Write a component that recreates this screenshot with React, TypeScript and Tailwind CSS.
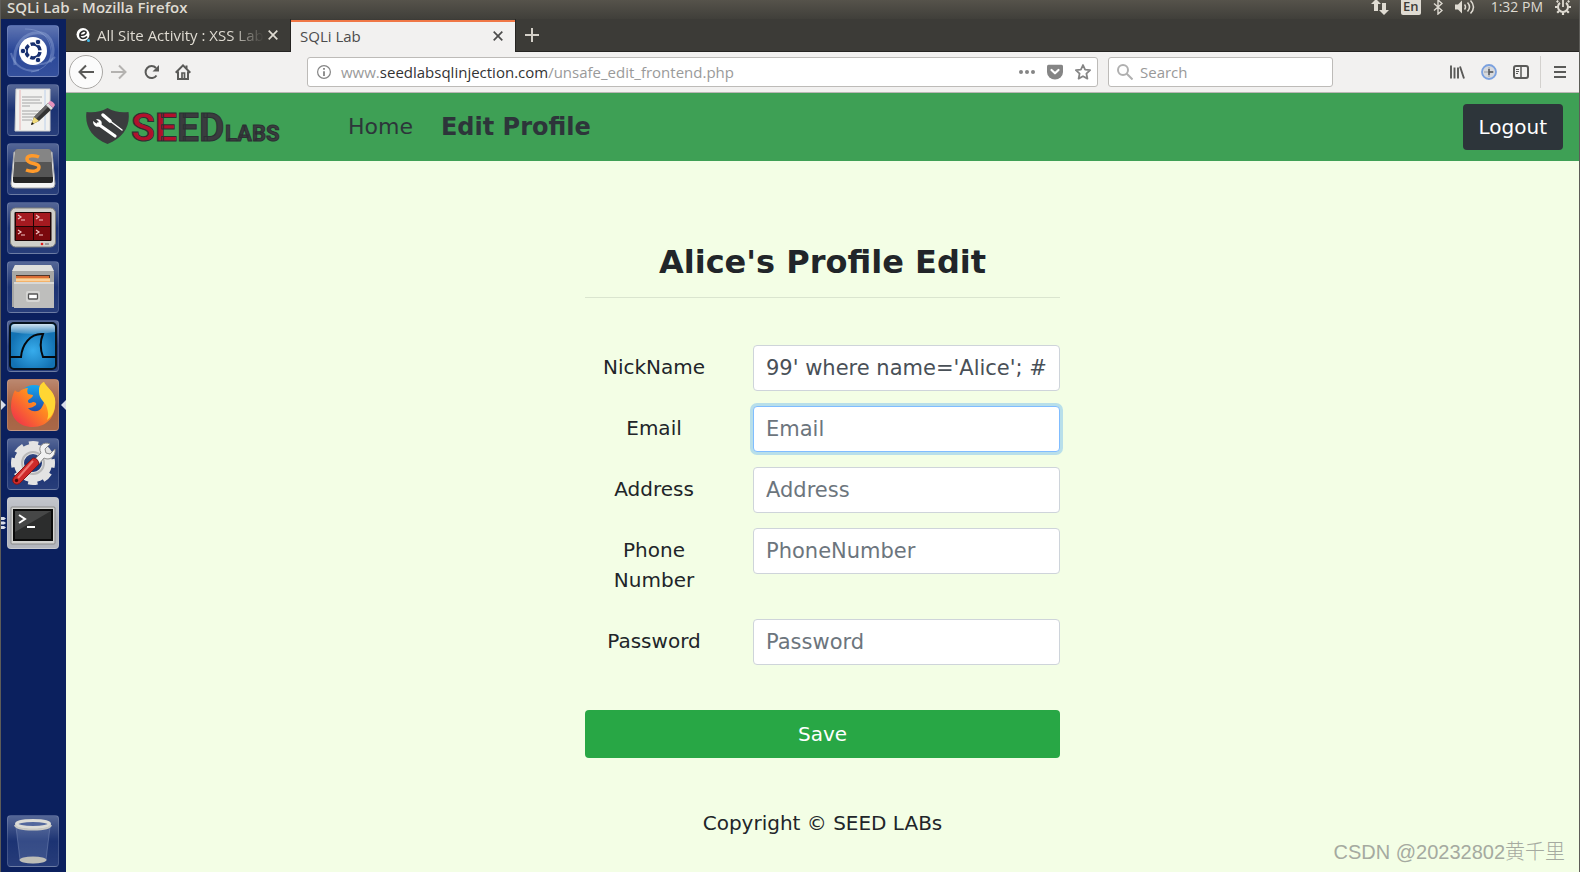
import type { ReactNode } from "react";

const fields = [
  { id: "nickname", label: "NickName", value: "99' where name='Alice'; #" },
  { id: "email", label: "Email", placeholder: "Email", active: true },
  { id: "address", label: "Address", placeholder: "Address" },
  { id: "phone", label: "Phone Number", placeholder: "PhoneNumber" },
  { id: "password", label: "Password", placeholder: "Password" },
];

export default function App() {
  return (
    <div className="relative flex min-h-screen flex-col border-x border-[#5d5c58] bg-[#3c3b37] font-['Open_Sans','Noto_Sans',sans-serif] text-[15px]">
      <TopPanel />
      <div className="flex flex-1">
        <Launcher />
        <div className="flex min-w-0 flex-1 flex-col">
          <TabStrip />
          <Toolbar />
          <ProfilePage />
        </div>
      </div>
      <div className="absolute right-3.5 bottom-2 font-['Liberation_Sans','Noto_Sans_CJK_SC',sans-serif] text-[20px] leading-6 font-light text-[#a5aaa0]">
        CSDN @20232802黄千里
      </div>
    </div>
  );
}

function TopPanel() {
  return (
    <header className="flex h-[19px] items-center bg-gradient-to-b from-[#56534b] to-[#403f3a] pr-2 pb-1.5 pl-1.5 text-[#dfdbd2]">
      <h1 className="text-[15px] leading-4 font-semibold">
        SQLi Lab - Mozilla Firefox
      </h1>
      <div className="ml-auto flex items-center">
        <svg className="mr-3 h-4 w-[18px]" viewBox="0 0 18 16" fill="currentColor">
          <path d="M5 0 0 5h3v7h4V5h3zM13 16l-5-5h3V4h4v7h3z" />
        </svg>
        <span className="mr-3 h-[17px] w-5 rounded-xs bg-[#dfdbd2] text-center text-[13px] leading-[17px] font-semibold text-[#3c3b37]">
          En
        </span>
        <svg className="mr-3 h-4 w-2.5" viewBox="0 0 10 16" fill="none" stroke="currentColor" strokeWidth="1.4">
          <path d="m1 4.500 8 7-4 3.500V1l4 3.500-8 7" />
        </svg>
        <svg className="mr-4 h-4 w-5" viewBox="0 0 20 16" fill="none" stroke="currentColor" strokeWidth="1.5">
          <path d="M0 5.500h3l4-4v13l-4-4H0z" fill="currentColor" stroke="none" />
          <path d="M9.500 5.500q2 2.500 0 5M12.500 3.500q4 4.500 0 9M15.500 1.500q6 6.500 0 13" />
        </svg>
        <span className="mr-3 text-[14px] leading-4">1:32 PM</span>
        <svg className="h-4 w-4" viewBox="0 0 16 16" fill="none" stroke="currentColor">
          <path d="M5 3.900a5 5 0 1 0 6 0" strokeWidth="2" />
          <path d="M8 1v7" strokeWidth="1.800" />
          <path
            d="M3.100 3.100 1.800 1.800M12.900 3.100l1.300-1.300M2.500 8H0M13.500 8H16M4 12l-1.800 1.800M12 12l1.800 1.800M8 13.500V16"
            strokeWidth="2.200"
          />
        </svg>
      </div>
    </header>
  );
}

function Tile({
  name,
  className = "bg-[#1c3373]",
  children,
}: {
  name: string;
  className?: string;
  children: ReactNode;
}) {
  return (
    <button
      aria-label={name}
      className={`relative block h-[52px] w-[52px] rounded border border-white/15 bg-gradient-to-b from-white/25 via-white/0 to-white/5 ${className}`}
    >
      <svg className="h-[50px] w-[50px]" viewBox="1 1 50 50">
        {children}
      </svg>
    </button>
  );
}

function Launcher() {
  return (
    <aside className="flex w-[65px] shrink-0 flex-col items-start gap-[7px] bg-[#0b205e] pt-1.5 pb-[5px] pl-1.5">
      <Tile name="Dash" className="bg-[#2a4798]">
        <g fill="none" stroke="#a9bce4" strokeOpacity=".35">
          <path d="M8 40C5 20 18 6 34 8c12 2 15 18 9 29" strokeWidth="3" />
          <path d="M18 4C35 4 44 13 44 28 43 41 32 46 24 47" />
          <path d="M4 28c3 13 14 20 28 17M48 32c-8 9-24 10-34 2" strokeWidth="2" />
        </g>
        <circle cx="26" cy="26" r="14" fill="#fff" />
        <circle cx="26" cy="26" r="7" fill="none" stroke="#172f70" strokeWidth="3.500" strokeDasharray="12.660 2" strokeDashoffset="-1" />
        <g fill="#172f70" stroke="#fff" strokeWidth="1">
          <circle cx="16" cy="26" r="2.800" />
          <circle cx="31" cy="17" r="2.800" />
          <circle cx="31" cy="35" r="2.800" />
        </g>
      </Tile>
      <Tile name="Text Editor">
        <path d="M9 5h34v42H8z" fill="#f1f1ef" stroke="#cfcfcf" />
        <path d="M13 6v40" stroke="#e9b3b3" />
        <path d="M38 6v40" stroke="#bcd0ea" />
        <path d="M15 13h20M15 16h18M15 19h20M15 22h8M15 27h20M15 30h17M15 33h12M15 36h10" stroke="#a5a5a5" />
        <path d="m24 41 3-8 14-14 5 5-14 13z" fill="#333" />
        <path d="m27 33 14-14 2 2-14 14z" fill="#666" />
        <path d="m24 41 3-8 5 4z" fill="#f2dc7a" />
        <path d="m24 41 1-3 2 2z" fill="#111" />
        <path d="m39 21 2-2 5 5-2 2z" fill="#ddd" />
        <path d="m41 19 2-2q3 0 5 4l-2 3z" fill="#e692bd" />
      </Tile>
      <Tile name="Sublime Text">
        <path d="M7 9h38l3 32q0 4-4 4H8q-4 0-4-4z" fill="#f4f4f4" stroke="#aaa" />
        <path d="M11 6h30q3 0 3 3l2 26H6L8 9q0-3 3-3z" fill="#555" />
        <path d="M11 6h30q3 0 3 3l1 10H7L8 9q0-3 3-3z" fill="#858585" />
        <path d="M6 34h40v4q0 2-2 2H8q-2 0-2-2z" fill="#262626" />
        <path d="M32 14c-4-2-12-2-12 2 0 6 12 3 12 8 0 5-8 5-13 3" fill="none" stroke="#ff9a2b" strokeWidth="3.500" />
      </Tile>
      <Tile name="Terminator">
        <rect x="3.500" y="6" width="45" height="39" rx="5" fill="#cfcfc9" stroke="#80807a" />
        <rect x="7.500" y="10" width="37" height="29" rx="1" fill="#1d0505" />
        <path d="M9 11h17v13H9zM27 11h16v13H27z" fill="#a41a20" />
        <path d="M9 25h17v13H9zM27 25h16v13H27z" fill="#7a080d" />
        <g fill="none" stroke="#f3c5c5" strokeWidth="1.200">
          <path d="m11 13 3 2-3 2M14 18h4M29 13l3 2-3 2M32 18h4M11 28l3 2-3 2M14 33h4M29 28l3 2-3 2M32 33h4" />
        </g>
        <circle cx="35" cy="42" r="1.300" fill="#e01b1b" />
        <path d="M38 41h4v2h-4z" fill="#999" />
      </Tile>
      <Tile name="Files">
        <path d="m8 4h36l3 7v35H5V11z" fill="#a7a7a5" />
        <path d="M8 4h36l3 6H5z" fill="#dededc" />
        <path d="M9 14h34v8H9z" fill="#51372a" />
        <path d="M9 15h33v4H9z" fill="#d96c35" />
        <path d="M9 17h34v5H9z" fill="#f3b269" />
        <path d="M9 19h34" stroke="#fff0d2" />
        <path d="M7 21h40v26H7z" fill="#bebebc" />
        <path d="M7 21h40v2H7z" fill="#d8d8d6" />
        <rect x="19" y="30" width="14" height="11" rx="2" fill="#d6d6d4" />
        <rect x="21.500" y="33" width="9" height="5" rx=".5" fill="#fff" stroke="#555" strokeWidth="1.300" />
      </Tile>
      <Tile name="Wireshark">
        <defs>
          <radialGradient id="sea" cy=".6">
            <stop stopColor="#37acec" />
            <stop offset="1" stopColor="#1372b3" />
          </radialGradient>
          <linearGradient id="gloss" x2="0" y2="1">
            <stop stopColor="#fff" stopOpacity=".8" />
            <stop offset="1" stopColor="#fff" stopOpacity=".15" />
          </linearGradient>
        </defs>
        <rect x="3" y="3" width="46" height="46" rx="4" fill="url(#sea)" stroke="#06121d" strokeWidth="2" />
        <path d="M4 8q0-4 4-4h36q4 0 4 4v4Q26 16 4 12z" fill="url(#gloss)" />
        <path d="M3 37h11c1-12 9-24 22-23-3 7-3 15 0 23h13" fill="none" stroke="#05080c" strokeWidth="2" />
      </Tile>
      <div className="relative">
        <Tile name="Firefox" className="bg-[#a5603f]">
          <defs>
            <linearGradient id="fire" x1="1" x2="0" y2="1">
              <stop stopColor="#ffd43b" />
              <stop offset=".45" stopColor="#ff8a20" />
              <stop offset="1" stopColor="#ee2451" />
            </linearGradient>
            <linearGradient id="globe" x2="0" y2="1">
              <stop stopColor="#14a7ef" />
              <stop offset="1" stopColor="#20399d" />
            </linearGradient>
          </defs>
          <circle cx="27" cy="22" r="16" fill="url(#globe)" />
          <path
            d="M8 11c1 2 3 2 4 2 3-3 6-4 9-4-1 2-1 4 0 6l5 1c0 3-5 4-5 6 0 3 3 2 5 1 2 0 4 1 3 3-3 2-4 3-8 3 4 5 12 4 14-1 4-6 2-11-3-15 0-5 1-8 5-10 1 4 9 8 11 17 2 17-8 28-22 28C12 48 4 39 4 27c0-6 2-12 4-16z"
            fill="url(#fire)"
          />
          <path d="M37 3c1 4 9 8 11 17 1 10-2 17-8 21 2-5 1-8 0-12-1-6-8-8-8-16 0-5 1-8 5-10z" fill="#ffd633" />
        </Tile>
        <svg className="absolute top-[21px] -left-[6px] h-2.5 w-[5px]" viewBox="0 0 5 10" fill="#d9dde8">
          <path d="m0 0 5 5-5 5z" />
        </svg>
        <svg className="absolute top-[21px] -right-[7px] h-2.5 w-[5px]" viewBox="0 0 5 10" fill="#d9dde8">
          <path d="M5 0 0 5l5 5z" />
        </svg>
      </div>
      <Tile name="System Settings">
        <circle cx="26" cy="25" r="14" fill="none" stroke="#e3e3e3" strokeWidth="10" />
        <circle cx="26" cy="25" r="19" fill="none" stroke="#e3e3e3" strokeWidth="6" strokeDasharray="9 5.920" strokeDashoffset="4.500" />
        <circle cx="26" cy="25" r="11" fill="none" stroke="#b9b9b9" strokeWidth="2" />
        <path d="m27 22 7-7c-4-7 3-12 9-9l-5 5 1 4 4 1 5-5c1 8-6 12-11 9l-5 6z" fill="#f1f1f1" stroke="#8a8a8a" />
        <path d="M26 20q5 0 6 6L13 45q-4 3-7-1-1-3 1-5z" fill="#cf2a2a" stroke="#891515" />
        <path d="M26 23 11 40" stroke="#ef7a74" strokeWidth="2" />
        <circle cx="9.500" cy="42.500" r="1.700" fill="#4d0a0a" />
      </Tile>
      <div className="relative">
        <Tile name="Terminal" className="bg-[#b0b3bb]">
          <rect x="4" y="10" width="44" height="37" rx="1" fill="#d3d3d1" stroke="#8b8b8b" />
          <rect x="7" y="13" width="38" height="30" fill="#2c2d2d" stroke="#0a0a0a" strokeWidth="2" />
          <path d="M8 14h36L8 35z" fill="#464747" />
          <path d="m12 18 6 4-6 4M20 30h8" fill="none" stroke="#fff" strokeWidth="2" />
        </Tile>
        <svg className="absolute top-5 -left-[6px] h-3 w-[5px]" viewBox="0 0 5 12" fill="#d9dde8">
          <path d="M0 0h3l2 1.500L3 3H0zM0 4.500h3L5 6 3 7.500H0zM0 9h3l2 1.500L3 12H0z" />
        </svg>
      </div>
      <div className="mt-auto">
        <Tile name="Trash">
          <path d="m9 12 4 33q13 6 26 0l4-33z" fill="#9db0d8" fillOpacity=".2" stroke="#9baacf" strokeOpacity=".35" />
          <ellipse cx="26" cy="45" rx="13.500" ry="3.500" fill="#bdbdb7" />
          <ellipse cx="26" cy="9" rx="16.500" ry="3.500" fill="#53689d" stroke="#dcdcd7" strokeWidth="3" />
          <path d="M8 10q1 4.500 18 4.500T44 10" fill="none" stroke="#c9c9c4" strokeWidth="2" />
        </Tile>
      </div>
    </aside>
  );
}

function CloseIcon() {
  return (
    <svg className="h-2.5 w-2.5" viewBox="0 0 10 10" fill="none" stroke="currentColor" strokeWidth="1.700">
      <path d="m.7.7 8.600 8.600M9.300.7.7 9.300" />
    </svg>
  );
}

function TabStrip() {
  return (
    <div className="flex h-[33px] items-end bg-[#3c3b37]">
      <div className="flex h-[33px] w-[225px] items-center border-r border-b border-[#252422] pr-3 pl-2.5 text-[#dfdbd2]">
        <svg className="h-3.5 w-3.5 shrink-0" viewBox="0 0 14 14">
          <circle cx="7" cy="6.500" r="6.500" fill="#fff" />
          <path d="M3.500 7.500C12 7.500 11 2.500 7.500 3 3 4 2.500 10.500 7 10.500c2 0 3-.8 4-2" fill="none" stroke="#292a2b" strokeWidth="1.600" />
          <circle cx="12.500" cy="12.500" r="1.500" fill="#42b8e6" />
        </svg>
        <button className="ml-[7px] flex-1 mask-r-from-80% text-left leading-5 whitespace-nowrap">
          All Site Activity : XSS Lab
        </button>
        <button aria-label="Close tab" className="ml-1">
          <CloseIcon />
        </button>
      </div>
      <div className="flex h-8 w-[224px] items-center justify-between border-t-2 border-[#f07746] bg-[#f2f1f0] pr-3 pb-0.5 pl-[9px] text-[#4c4c4c]">
        <button className="leading-5">SQLi Lab</button>
        <button aria-label="Close tab">
          <CloseIcon />
        </button>
      </div>
      <button
        aria-label="New tab"
        className="flex h-[33px] flex-1 items-center border-b border-l border-[#252422] pl-[9px] text-[#d4d0c8]"
      >
        <svg className="h-3.5 w-3.5" viewBox="0 0 14 14" stroke="currentColor" strokeWidth="2">
          <path d="M7 0v14M0 7h14" />
        </svg>
      </button>
    </div>
  );
}

function Toolbar() {
  return (
    <div className="flex h-[41px] items-center border-b border-[#b9b7b5] bg-[#f2f1f0] pr-[13px] text-[#5a5a58]">
      <button aria-label="Back" className="ml-[3px] flex h-[34px] w-[34px] items-center justify-center rounded-full border border-[#a9a7a4] bg-[#fbfbfb]">
        <svg className="h-4 w-4" viewBox="0 0 16 16" fill="none" stroke="currentColor" strokeWidth="2">
          <path d="M16 8H1.500M8 1.500 1.500 8 8 14.500" />
        </svg>
      </button>
      <button aria-label="Forward" className="ml-2 text-[#b4b2b0]">
        <svg className="h-4 w-4" viewBox="0 0 16 16" fill="none" stroke="currentColor" strokeWidth="2">
          <path d="M0 8h14.500M8 1.500 14.500 8 8 14.500" />
        </svg>
      </button>
      <button aria-label="Reload" className="ml-4">
        <svg className="h-4 w-4" viewBox="0 0 16 16" fill="none" stroke="currentColor" strokeWidth="2">
          <path d="M13.500 11.500A6 6 0 1 1 13 4" />
          <path d="M16 1v6.500H9.500z" fill="currentColor" stroke="none" />
        </svg>
      </button>
      <button aria-label="Home" className="ml-4">
        <svg className="h-4 w-4" viewBox="0 0 16 16" fill="none" stroke="currentColor" strokeWidth="2">
          <path d="M.7 8.700 8 1.400l7.300 7.300M3 7.500V15h10V7.500" />
          <path d="M7 15V9h2.500v6" strokeWidth="1.700" />
          <path d="M11.500 4.500V1.500" />
        </svg>
      </button>
      <div className="ml-[116px] flex h-[30px] flex-1 items-center rounded-[3px] border border-[#bdbbb8] bg-white pr-1.5 pl-[9px]">
        <svg className="h-3.5 w-3.5" viewBox="0 0 14 14" fill="none" stroke="#858585">
          <circle cx="7" cy="7" r="6.400" strokeWidth="1.200" />
          <path d="M7 3v1.800M7 6.200V11" strokeWidth="1.800" />
        </svg>
        <a href="#" className="ml-2.5 leading-5 text-[#9a9a9a]">
          www.<span className="text-[#333]">seedlabsqlinjection.com</span>
          /unsafe_edit_frontend.php
        </a>
        <div className="ml-auto flex items-center gap-3 text-[#858585]">
          <button aria-label="Page actions">
            <svg className="h-4 w-4" viewBox="0 0 16 16" fill="currentColor">
              <circle cx="2" cy="8" r="2" />
              <circle cx="8" cy="8" r="2" />
              <circle cx="14" cy="8" r="2" />
            </svg>
          </button>
          <button aria-label="Save to Pocket">
            <svg className="h-4 w-4" viewBox="0 0 16 16">
              <path d="M1.500.7h13Q16 .7 16 2.200V8a8 7.500 0 0 1-16 0V2.200Q0 .7 1.500.7z" fill="currentColor" />
              <path d="M4.500 6 8 9.300 11.500 6" fill="none" stroke="#fff" strokeWidth="2.200" strokeLinecap="round" strokeLinejoin="round" />
            </svg>
          </button>
          <button aria-label="Bookmark">
            <svg className="h-4 w-4" viewBox="0 0 16 16" fill="none" stroke="currentColor" strokeWidth="1.800" strokeLinejoin="round">
              <path d="m8 1 2.100 4.600 5 .6-3.700 3.400 1 5L8 12.200l-4.400 2.400 1-5L.9 6.200l5-.6z" />
            </svg>
          </button>
        </div>
      </div>
      <label className="ml-2.5 flex h-[30px] w-[225px] items-center rounded-[3px] border border-[#bdbbb8] bg-white pl-2">
        <svg className="h-4 w-4 shrink-0" viewBox="0 0 16 16" fill="none" stroke="#b0b0b0" strokeWidth="2">
          <circle cx="6" cy="6" r="5" />
          <path d="m9.500 9.500 6 6" />
        </svg>
        <input
          type="search"
          aria-label="Search"
          placeholder="Search"
          className="ml-[7px] w-full min-w-0 bg-transparent leading-5 outline-none placeholder:text-[#999]"
        />
      </label>
      <div className="ml-[116px] flex items-center">
        <button aria-label="Library">
          <svg className="h-4 w-4" viewBox="0 0 16 16" stroke="currentColor" strokeWidth="1.900">
            <path d="M2 1.500v13M5.500 3.500v11M9 3.500v11M11 2.500l4 12" />
          </svg>
        </button>
        <button aria-label="Live headers" className="ml-4">
          <svg className="h-4 w-4" viewBox="0 0 16 16">
            <circle cx="8" cy="8" r="7" fill="#d7d9dc" stroke="#7ba1df" strokeWidth="1.800" />
            <path d="M8 3v10M3 8h10" stroke="#9a9da1" />
            <path d="M8 5v6M8 8h4" stroke="#55585c" strokeWidth="1.500" />
          </svg>
        </button>
        <button aria-label="Sidebars" className="ml-4">
          <svg className="h-4 w-4" viewBox="0 0 16 16" fill="none" stroke="currentColor">
            <rect x="1" y="2" width="14" height="12" rx="2" strokeWidth="2" />
            <path d="M8 2v12" strokeWidth="1.500" />
            <path d="M3 5.500h3M3 7.500h3M3 9.500h2" />
          </svg>
        </button>
        <span className="ml-[11px] h-8 w-px bg-[#d3d1ce]" />
        <button aria-label="Menu" className="ml-[13px]">
          <svg className="h-3 w-3" viewBox="0 0 12 12" stroke="currentColor" strokeWidth="2">
            <path d="M0 1h12M0 6h12M0 11h12" />
          </svg>
        </button>
      </div>
    </div>
  );
}

function SeedLogo() {
  return (
    <svg className="h-[60px] w-[202px]" viewBox="0 -11 202 60" role="img" aria-label="SEED Labs">
      <path d="M21.500 0c7 4 14 5 21 4 2 14-5 26-21 32C5.500 30-1.500 18 .5 4c7 1 14 0 21-4z" fill="#3a3c3e" />
      <path d="m12 16 17 12" stroke="#fff" strokeWidth="3.200" strokeLinecap="round" />
      <path d="M7 13c0 5 4 7 8 5 2-4 0-7-5-7l3 3-2 2z" fill="#fff" />
      <path d="m17 7 7 6" stroke="#fff" strokeWidth="3.500" strokeLinecap="round" />
      <path d="m24 13 12 9" stroke="#fff" strokeWidth="1.500" strokeLinecap="round" />
      <g
        fontFamily="Roboto, sans-serif"
        fontWeight="700"
        stroke="#2b3033"
        strokeWidth="1"
        fill="#3a3c3e"
      >
        <text x="45" y="33" fontSize="39">
          <tspan fill="#b1102c">SE</tspan>ED
        </text>
        <text x="139" y="33" fontSize="22">
          LABS
        </text>
      </g>
    </svg>
  );
}

function ProfilePage() {
  return (
    <div className="flex flex-1 flex-col bg-[#f3fee5] font-['DejaVu_Sans',sans-serif] text-[20px] text-[#212529]">
      <nav className="flex h-[68px] items-center bg-[#3ea055] pr-4 pl-5 text-[#2d353a]">
        <a href="#">
          <SeedLogo />
        </a>
        <a href="#" className="ml-[60px] text-[22px] leading-8">
          Home
        </a>
        <a href="#" className="ml-7 text-[24px] leading-8 font-bold">
          Edit Profile
        </a>
        <button className="ml-auto h-[46px] rounded bg-[#2d353a] px-4 text-white">
          Logout
        </button>
      </nav>
      <main className="mx-auto w-full max-w-[475px] pt-[82px]">
        <h2 className="text-center text-[32px] leading-[38px] font-bold">
          Alice's Profile Edit
        </h2>
        <hr className="mt-4 mb-[47px] border-[#dae5cf]" />
        <form className="flex flex-col gap-[15px]">
          {fields.map((field) => (
            <div key={field.id} className="flex items-start gap-[30px]">
              <label
                htmlFor={field.id}
                className="w-[138px] px-4 pt-[7px] pb-[9px] text-center leading-[30px]"
              >
                {field.label}
              </label>
              <input
                id={field.id}
                type={field.id === "password" ? "password" : "text"}
                defaultValue={field.value}
                placeholder={field.placeholder}
                className={`h-[46px] min-w-0 flex-1 rounded border bg-white px-3 text-[21px] text-[#495057] outline-none placeholder:text-[#6c757d] ${
                  field.active
                    ? "border-[#80bdff] ring-3 ring-[#b8dfea]"
                    : "border-[#ced4da]"
                }`}
              />
            </div>
          ))}
          <button
            type="submit"
            className="mt-[30px] h-12 rounded bg-[#28a745] text-white"
          >
            Save
          </button>
        </form>
      </main>
      <footer className="mt-[50px] mb-8 text-center leading-[30px]">
        Copyright © SEED LABs
      </footer>
    </div>
  );
}
